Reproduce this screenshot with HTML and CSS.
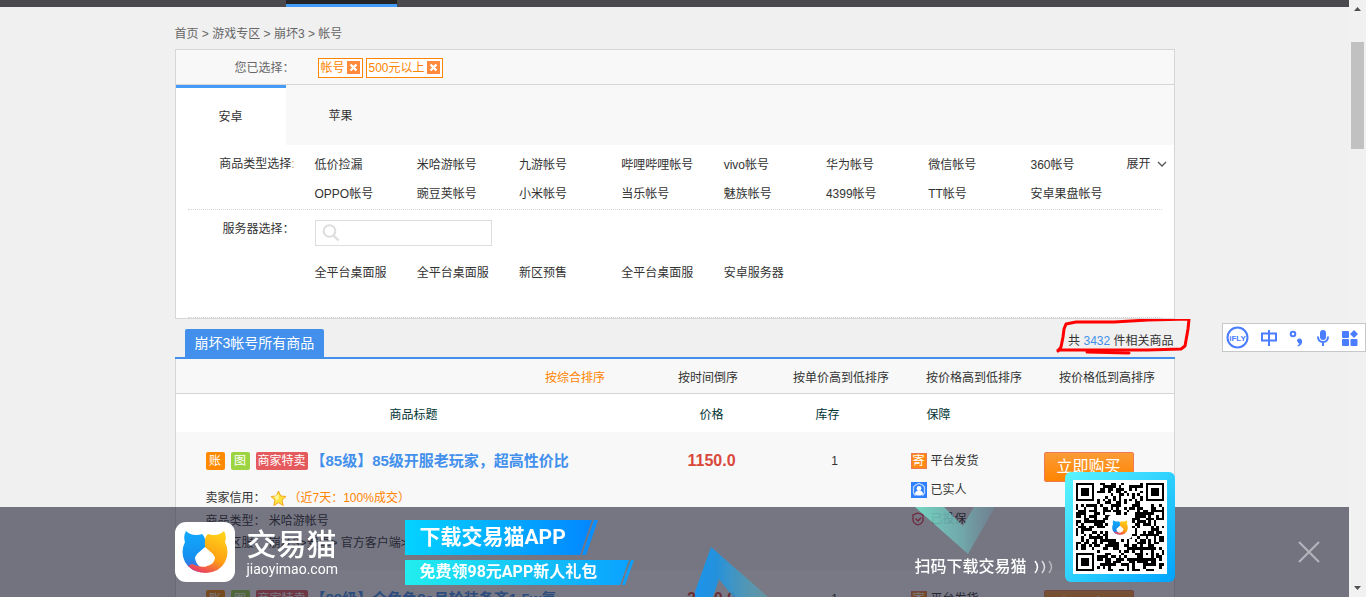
FILE: index.html
```html
<!DOCTYPE html>
<html lang="zh-CN">
<head>
<meta charset="utf-8">
<title>崩坏3帐号</title>
<link rel="stylesheet" href="styles.css">
</head>
<body>
<svg class="defs" aria-hidden="true">
  <defs>
    <linearGradient id="catL" x1="0" y1="0" x2="0" y2="1"><stop offset="0" stop-color="#12aaff"/><stop offset=".65" stop-color="#1590f0"/><stop offset="1" stop-color="#5b62d8"/></linearGradient>
    <linearGradient id="catR" x1=".7" y1="0" x2=".3" y2="1"><stop offset="0" stop-color="#ffd21a"/><stop offset=".6" stop-color="#ff9d12"/><stop offset="1" stop-color="#e83a68"/></linearGradient>
    <linearGradient id="rib1" x1="0" x2="1"><stop offset="0" stop-color="#04d3ff"/><stop offset="1" stop-color="#0387ff"/></linearGradient>
    <linearGradient id="rib2" x1="0" x2="1"><stop offset="0" stop-color="#22eeee"/><stop offset="1" stop-color="#0aa2ff"/></linearGradient>
    <linearGradient id="triB" x1="0" x2="1"><stop offset="0" stop-color="#1a94ee"/><stop offset=".3" stop-color="#2491dc"/><stop offset="1" stop-color="#5fb0b4" stop-opacity=".45"/></linearGradient>
    <linearGradient id="triG" x1="0" x2="1"><stop offset="0" stop-color="#74e0c8"/><stop offset=".6" stop-color="#6fb9b9" stop-opacity=".8"/><stop offset="1" stop-color="#6a93a8" stop-opacity=".4"/></linearGradient>
    <symbol id="cat" viewBox="0 0 46 42">
      <path fill="url(#catL)" d="M4 0 Q8 4 14 4 Q18 4 20 3 Q24 6 23 14 L23 17 L13 26 Q13 31 17 35 L24 41 Q9 42 3 31 Q-2 21 3 11 Q1 5 4 0Z"/>
      <path fill="url(#catR)" d="M42 0 Q38 4 32 4 Q28 4 26 3 Q22 6 23 14 L23 17 L33 26 Q33 33 25 35 Q18 37 10 33 L6 35 Q13 42 24 42 Q38 41 43 31 Q48 21 43 11 Q45 5 42 0Z"/>
      <path fill="#fff" d="M23 16 L31 23 Q34 27 30 31 L23 36 L16 31 Q12 27 15 23Z"/>
    </symbol>
    <symbol id="close" viewBox="0 0 13 13"><path fill="#ff8a3d" d="M0 0h13v13H0z"/><path d="M3.5 3.5l6 6m0-6l-6 6" stroke="#fff" stroke-width="2.4"/></symbol>
    <symbol id="star" viewBox="0 0 17 17"><path d="M8.500 1l2.200 5 5.300.5-4 3.600 1.200 5.400-4.700-2.900-4.700 2.900L5 10.100l-4-3.600 5.300-.5z" fill="#ffe23c" stroke="#f2a81c"/><path d="M8.500 4v5l-3 3 1-3-2.500-2z" fill="#fff6a0"/></symbol>
    <symbol id="person" viewBox="0 0 16 16"><path fill="#2f80ff" d="M0 0h16v16H0z"/><path d="M5 13H4L2.500 11V5l2-2L8 1.500 11.500 3l2 2v6L12 13h-1" fill="none" stroke="#b9d6ff" stroke-width="1.300"/><circle cx="8" cy="6.500" r="2.400" fill="#fff"/><path d="M4 12q0-3.500 4-3.500t4 3.500l-2 1.500H6z" fill="#fff"/></symbol>
    <symbol id="shield" viewBox="0 0 16 16"><path d="M7 2l5 2v5q0 3-5 5-5-2-5-5V4z" fill="none" stroke="#e5344a" stroke-width="1.300"/><path d="M4.500 7.500L7 10l3-3.200" fill="none" stroke="#e5344a" stroke-width="1.300"/></symbol>
  </defs>
</svg>

<div class="viewport">
  <nav class="topbar"><div class="wrap"><a class="topbar-current" href="#" aria-label="游戏专区"></a></div></nav>
  <main class="wrap">
    <nav class="crumbs"><a href="#">首页</a> &gt; <a href="#">游戏专区</a> &gt; <a href="#">崩坏3</a> &gt; <a href="#">帐号</a></nav>

    <section class="filters">
      <div class="chosen">
        <span class="label">您已选择：</span>
        <div class="tags">
          <button class="tag" type="button">帐号<svg><use href="#close"/></svg></button>
          <button class="tag" type="button">500元以上<svg><use href="#close"/></svg></button>
        </div>
      </div>
      <div class="tabs"><button class="tab tab-on" type="button">安卓</button><button class="tab" type="button">苹果</button></div>
      <div class="filter">
        <span class="label">商品类型选择<i>:</i></span>
        <div class="options">
          <a href="#">低价捡漏</a><a href="#">米哈游帐号</a><a href="#">九游帐号</a><a href="#">哔哩哔哩帐号</a><a href="#">vivo帐号</a><a href="#">华为帐号</a><a href="#">微信帐号</a><a href="#">360帐号</a>
          <a href="#">OPPO帐号</a><a href="#">豌豆荚帐号</a><a href="#">小米帐号</a><a href="#">当乐帐号</a><a href="#">魅族帐号</a><a href="#">4399帐号</a><a href="#">TT帐号</a><a href="#">安卓果盘帐号</a>
        </div>
        <button class="expand" type="button">展开<svg viewBox="0 0 10 6"><path d="M1 1l4 4 4-4" fill="none" stroke="#555" stroke-width="1.300"/></svg></button>
      </div>
      <div class="filter filter-server">
        <label class="label" for="server">服务器选择：</label>
        <div class="server">
          <div class="search"><svg viewBox="0 0 18 18"><circle cx="7.500" cy="7" r="5.800" fill="none" stroke="#ddd" stroke-width="2"/><path d="M11.500 11.500l5 5" stroke="#ddd" stroke-width="2.400"/></svg><input id="server" type="text"></div>
          <div class="options">
            <a href="#">全平台桌面服</a><a href="#">全平台桌面服</a><a href="#">新区预售</a><a href="#">全平台桌面服</a><a href="#">安卓服务器</a>
          </div>
        </div>
      </div>
    </section>

    <header class="list-head">
      <h1>崩坏3帐号所有商品</h1>
      <p class="count">共 <b>3432</b> 件相关商品
        <svg class="mark" viewBox="0 0 136 38" aria-hidden="true"><g fill="none" stroke="#f00" stroke-width="3" stroke-linecap="round" stroke-linejoin="round"><path d="M2 32l3-4 2-10 1-8 2-5 10-2 38 0 34-2 41-1-1 10-3 17-4 3-34 1-89 0"/><path d="M31 33l42 1"/></g></svg>
      </p>
    </header>

    <section class="list">
      <div class="sorts"><a class="sort-on" href="#">按综合排序</a><a href="#">按时间倒序</a><a href="#">按单价高到低排序</a><a href="#">按价格高到低排序</a><a href="#">按价格低到高排序</a></div>
      <table>
        <colgroup><col><col class="c-price"><col class="c-stock"><col class="c-safe"><col class="c-buy"></colgroup>
        <thead><tr><th>商品标题</th><th>价格</th><th>库存</th><th>保障</th><th></th></tr></thead>
        <tbody>
          <tr>
            <td class="goods">
              <div class="goods-title"><span class="badge b-acc">账</span><span class="badge b-pic">图</span><span class="badge b-shop">商家特卖</span><a href="#">【85级】85级开服老玩家，超高性价比</a></div>
              <div class="credit">卖家信用：<svg><use href="#star"/></svg><span>（近7天：100%成交）</span></div>
              <div class="info">商品类型： 米哈游帐号</div>
              <div class="info">游戏区服： 崩坏3&gt;安卓&gt; 官方客户端&gt;</div>
            </td>
            <td class="price">1150.0</td>
            <td class="stock">1</td>
            <td class="safe"><ul><li><span class="send">寄</span>平台发货</li><li><svg><use href="#person"/></svg>已实人</li><li><svg><use href="#shield"/></svg>已投保</li></ul></td>
            <td class="buy"><button type="button">立即购买</button></td>
          </tr>
          <tr>
            <td class="goods">
              <div class="goods-title"><span class="badge b-acc">账</span><span class="badge b-pic">图</span><span class="badge b-shop">商家特卖</span><a href="#">【88级】全角色8s月轮装备齐1.5w氪</a></div>
            </td>
            <td class="price">2200.0</td>
            <td class="stock">1</td>
            <td class="safe"><ul><li><span class="send">寄</span>平台发货</li></ul></td>
            <td class="buy"><button type="button">立即购买</button></td>
          </tr>
        </tbody>
      </table>
    </section>
  </main>

  <aside class="banner">
    <div class="wrap banner-in">
      <svg class="tri-blue" viewBox="0 0 84 50"><path d="M16 0L80 56H43L24 32L16 56H-4Z" fill="url(#triB)"/></svg>
      <svg class="tri-green" viewBox="0 0 80 48"><path d="M0 0H29L48 19L59 0H80L53 47Z" fill="url(#triG)"/></svg>
      <div class="logo"><svg><use href="#cat"/></svg></div>
      <div class="brand"><strong>交易猫</strong><span>jiaoyimao.com</span></div>
      <div class="ribbons">
        <div class="ribbon r1"><svg viewBox="0 0 193 35"><path d="M0 0H187L175 35H0Z" fill="url(#rib1)"/><path d="M189 0h4l-12 35h-4z" fill="#0a8fff"/></svg><span>下载交易猫APP</span></div>
        <div class="ribbon r2"><svg viewBox="0 0 229 25"><path d="M0 0H224L215 25H0Z" fill="url(#rib2)"/><path d="M226 0h3l-9 25h-3z" fill="#0aa2ff"/></svg><span>免费领98元APP新人礼包</span></div>
      </div>
      <div class="scan">扫码下载交易猫<svg viewBox="0 0 20 14"><g fill="none" stroke="#fff" stroke-width="1.500"><path d="M1 1q5 6 0 12"/><path d="M8 1q5 6 0 12" opacity=".75"/><path d="M15 1q5 6 0 12" opacity=".45"/></g></svg></div>
      <div class="qr"><svg id="qr" viewBox="-1 -1 35 35" shape-rendering="crispEdges"></svg><span class="qr-logo"><svg><use href="#cat"/></svg></span></div>
    </div>
    <button class="banner-close" type="button" aria-label="关闭"><svg viewBox="0 0 22 22"><path d="M1 1l20 20M21 1L1 21" stroke="#b4b5bc" stroke-width="2"/></svg></button>
  </aside>
</div>

<div class="scrollbar"><svg viewBox="0 0 7 4"><path d="M0 4L3.500 0 7 4z"/></svg><i class="thumb"></i><svg viewBox="0 0 7 4"><path d="M0 0L3.500 4 7 0z"/></svg></div>

<div class="ime">
  <svg viewBox="0 0 142 27">
    <g fill="#4a7dff">
      <circle cx="14.500" cy="13.500" r="10" fill="#fff" stroke="#4a7dff" stroke-width="2"/>
      <text class="ime-fly" x="14.500" y="16.500" text-anchor="middle">iFLY</text>
      <g fill="none" stroke="#4a7dff" stroke-width="2"><path d="M39 9.500h14v7H39zM46 6v16"/><circle cx="70" cy="10" r="2.300"/></g>
      <path d="M74 17a2.500 2.500 0 1 1 2.500 2.500q-1 0-1.500-.4 0-1-1-2.100zM79 17q.5 4-4 5.500l-.5-1q2-1 2.300-3z"/>
      <rect x="97" y="6" width="6" height="10" rx="3"/>
      <path d="M95 12.500q0 5.500 5 5.500t5-5.500M100 18v4" fill="none" stroke="#4a7dff" stroke-width="2"/>
      <rect x="119" y="7" width="7" height="7" rx="1"/><rect x="119" y="15" width="7" height="7" rx="1"/><rect x="127.500" y="15" width="7" height="7" rx="1"/><path d="M131 6l4 4-4 4-4-4z"/>
    </g>
  </svg>
</div>
<script src="qr.js"></script>
</body>
</html>
```
FILE: styles.css
```css
* { box-sizing: border-box; }
html, body { height: 100%; margin: 0; overflow: hidden; }
body {
  display: flex;
  background: #f0f0f0;
  color: #333;
  font: 12px/18px "Liberation Sans", "Noto Sans CJK SC", sans-serif;
}
a { color: inherit; text-decoration: none; }
button { font: inherit; color: inherit; border: 0; padding: 0; background: none; cursor: pointer; }
svg { display: block; }
.defs { position: absolute; width: 0; height: 0; }
.viewport { flex: 1; min-width: 0; overflow: hidden; }
.wrap { max-width: 1000px; margin: 0 auto; }

.topbar { background: #4a494d; }
.topbar .wrap { display: flex; padding-left: 111px; }
.topbar-current { width: 111px; height: 7px; background: #252427; border-bottom: 3px solid #459bf8; }

.crumbs { padding: 18px 0 6px; color: #666; }

.filters { background: #fff; border: 1px solid #d6d6d6; }
.label { width: 119px; flex: none; text-align: right; }
.label i { color: #c79a62; font-style: normal; }
.chosen { display: flex; align-items: center; height: 35px; padding-top: 1px; background: #f8f8f8; border-bottom: 1px solid #d6d6d6; color: #666; }
.tags { display: flex; gap: 3px; padding-left: 23px; }
.tag { display: flex; align-items: center; gap: 2px; height: 20px; padding: 0 2px; border: 1px solid #ff8400; background: #fff; color: #ff8400; }
.tag svg { width: 13px; height: 13px; }
.tabs { display: flex; background: #f8f8f8; }
.tab { width: 110px; height: 60px; padding-top: 2px; }
.tab-on { padding-top: 0; background: #fff; border-top: 3px solid #459bf8; }
.filter { display: flex; padding-top: 10px; }
.options { flex: 1; display: grid; grid-template-columns: repeat(7, 1fr) 96px; row-gap: 11px; margin-left: 20px; white-space: nowrap; }
.filter .options { padding-top: 1px; padding-bottom: 6px; }
.expand { display: flex; align-items: center; align-self: flex-start; gap: 6px; width: 47px; height: 18px; }
.expand svg { width: 10px; height: 6px; }
.filter-server { margin: 0 12px; border: dotted #d6d6d6; border-width: 1px 0; padding-bottom: 29px; }
.filter-server .label { width: 107px; }
.server { flex: 1; margin-left: 20px; }
.server .options { margin: 17px 35px 0 0; }
.search { display: flex; align-items: center; width: 177px; height: 26px; padding-left: 6px; border: 1px solid #ddd; }
.search svg { width: 18px; height: 18px; }
.search input { flex: 1; min-width: 0; height: 24px; border: 0; outline: 0; background: none; }

.list-head { display: flex; justify-content: space-between; padding: 10px 0 0 10px; border-bottom: 2px solid #4290ec; }
.list-head h1 { margin: 0; padding: 0 10px; border-radius: 2px 2px 0 0; background: #4290ec; color: #fff; font-size: 14px; font-weight: 400; line-height: 28px; }
.count { position: relative; margin: 3px 1px 0 0; }
.count b { color: #4290ec; font-weight: 400; }
.mark { position: absolute; left: -12px; top: -13px; width: 136px; height: 38px; }

.list { border: solid #d6d6d6; border-width: 0 1px; background: #fff; }
.sorts { display: grid; grid-template-columns: 1fr repeat(5, 133px); height: 35px; padding-top: 3px; align-items: center; text-align: center; background: #f8f8f8; border-bottom: 1px solid #d6d6d6; }
.sort-on { grid-column: 2; color: #ff8400; }
table { width: 100%; table-layout: fixed; border-collapse: collapse; }
.c-price { width: 120px; }
.c-stock { width: 112px; }
.c-safe { width: 110px; }
.c-buy { width: 180px; }
th { height: 38px; padding: 3px 0 0; font-weight: 400; color: #033; }
td { height: 138px; padding: 20px 0 0; vertical-align: top; }
tbody tr:nth-child(odd) { background: #f8f8f8; }
.goods { padding-left: 30px; white-space: nowrap; }
.goods-title { display: flex; align-items: center; height: 18px; }
.goods-title a { margin-left: 3px; color: #4290ec; font-size: 15px; font-weight: 700; }
.badge { width: 19px; margin-right: 6px; border-radius: 2px; color: #fff; text-align: center; }
.b-acc { background: #ff8a00; }
.b-pic { background: #9cd442; }
.b-shop { width: 52px; margin-right: 0; background: #e55a5c; }
.credit { display: flex; align-items: center; height: 24px; margin-top: 16px; }
.credit svg { width: 17px; height: 17px; margin-left: 4px; }
.credit span { margin-left: 2px; color: #ff8400; }
.info { line-height: 22px; }
.price { text-align: center; color: #d9483b; font-size: 16px; font-weight: 700; }
.stock { padding-left: 14px; text-align: center; }
.safe ul { margin: 0; padding: 0 0 0 27px; list-style: none; }
.safe li { display: flex; align-items: center; gap: 4px; height: 18px; margin-bottom: 11px; }
.safe svg, .send { width: 16px; height: 16px; flex: none; }
.send { background: #ff8a14; color: #fff; outline: 1px solid #ec7a52; outline-offset: -1px; font-size: 12px; line-height: 16px; text-align: center; }
.buy { padding-left: 50px; }
.buy button { width: 90px; height: 30px; border: 1px solid #ec7a52; border-radius: 2px; background: linear-gradient(#fb9c36, #ff8400); color: #fff; font-size: 16px; line-height: 28px; }

.banner { position: fixed; left: 0; right: 17px; bottom: 0; background: rgba(30, 32, 52, .6); color: #fff; }
.banner-in { position: relative; display: flex; align-items: center; height: 90px; }
.tri-blue { position: absolute; left: 520px; bottom: 0; width: 84px; height: 50px; }
.tri-green { position: absolute; left: 740px; top: 0; width: 80px; height: 48px; opacity: .9; }
.logo { display: flex; align-items: center; justify-content: center; width: 60px; height: 60px; border-radius: 11px; background: #fff; }
.logo svg { width: 46px; height: 42px; }
.brand { width: 158px; margin-left: 12px; }
.brand strong, .brand span { display: block; }
.brand strong { font-size: 30px; font-weight: 500; line-height: 34px; }
.brand span { font-family: Roboto, sans-serif; font-size: 14px; line-height: 14px; }
.ribbons { display: grid; gap: 5px; }
.ribbon { position: relative; display: flex; align-items: center; padding-left: 15px; font-weight: 700; }
.ribbon svg { position: absolute; inset: 0; width: 100%; height: 100%; }
.ribbon span { position: relative; font-family: Roboto, "Noto Sans CJK SC", sans-serif; white-space: nowrap; }
.r1 { width: 193px; height: 35px; font-size: 21px; }
.r2 { width: 229px; height: 25px; font-size: 16px; }
.scan { position: relative; display: flex; align-items: center; gap: 7px; margin: 30px 121px 0 auto; font-size: 16px; font-weight: 500; }
.scan svg { width: 20px; height: 14px; }
.qr { position: absolute; right: 0; bottom: 15px; width: 110px; height: 110px; padding: 8px; border-radius: 6px; background: linear-gradient(135deg, #5cf5ff, #2fd0ff 50%, #00a2ff); }
.qr > svg { width: 94px; height: 94px; background: #fff; }
.qr-logo { position: absolute; left: 43px; top: 43px; display: flex; align-items: center; justify-content: center; width: 24px; height: 24px; border-radius: 4px; background: #fff; }
.qr-logo svg { width: 16px; height: 15px; }
.banner-close { position: absolute; right: 29px; top: 34px; }
.banner-close svg { width: 22px; height: 22px; }

.scrollbar { display: flex; flex-direction: column; align-items: center; width: 17px; padding: 7px 0; background: #f1f1f1; }
.scrollbar svg { width: 7px; height: 4px; fill: #505050; }
.thumb { width: 13px; height: 107px; margin: 31px 0 auto; background: #c1c1c1; }

.ime { position: fixed; right: 0; top: 323px; width: 144px; border: 1px solid #c8c8cc; background: #fff; }
.ime-fly { font: 700 8px "Liberation Sans", sans-serif; }
```
FILE: qr.js
```js
// Draws a 33-module code into the banner: finders, timing lines and data modules.
(function () {
  var N = 33, seed = 4271, d = '';
  function rnd() { seed = (seed * 1103515245 + 12345) % 2147483648; return seed / 2147483648; }
  function ring(x, y, cx, cy) { return Math.max(Math.abs(x - cx), Math.abs(y - cy)); }
  for (var y = 0; y < N; y++) {
    for (var x = 0; x < N; x++) {
      var on = rnd() > 0.5;
      if (x === 6 || y === 6) on = (x + y) % 2 === 0;
      if (ring(x, y, 26, 26) <= 2) on = ring(x, y, 26, 26) !== 1;
      [[3, 3], [29, 3], [3, 29]].forEach(function (c) {
        var r = ring(x, y, c[0], c[1]);
        if (r <= 4) on = r === 3 || r <= 1;
      });
      if (on) d += 'M' + x + ' ' + y + 'h1v1h-1z';
    }
  }
  var p = document.createElementNS('http://www.w3.org/2000/svg', 'path');
  p.setAttribute('d', d);
  document.getElementById('qr').appendChild(p);
})();
```
